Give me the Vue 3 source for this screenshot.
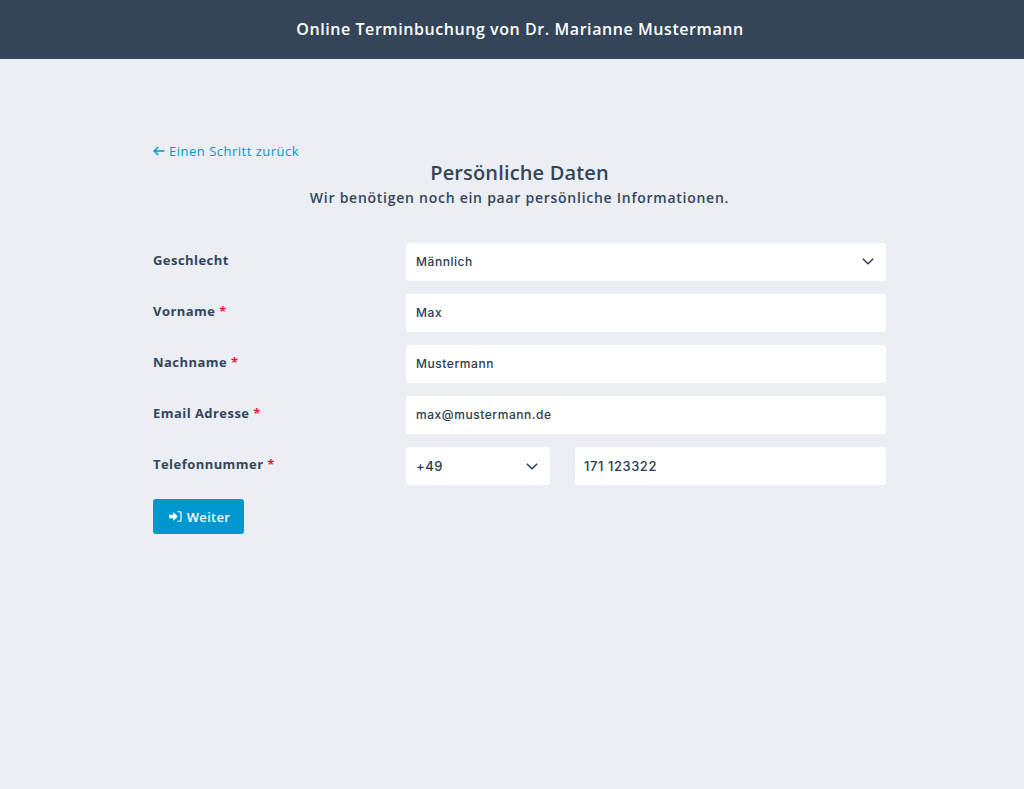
<template>
  <div class="page">
    <header class="topbar">Online Terminbuchung von Dr. Marianne Mustermann</header>
    <main class="content">
      <a class="back" href="#">
        <svg class="back-icon" viewBox="0 0 12 10" width="12" height="10" aria-hidden="true">
          <path d="M5.2 1 1.2 5l4 4M1.400 5H11.400" fill="none" stroke="currentColor" stroke-width="1.500" />
        </svg>
        Einen Schritt zurück
      </a>
      <h1 class="title">Persönliche Daten</h1>
      <p class="subtitle">Wir benötigen noch ein paar persönliche Informationen.</p>

      <form class="form" @submit.prevent>
        <div class="row" v-for="field in fields" :key="field.label">
          <label class="label">
            {{ field.label }}<span v-if="field.required" class="req"> *</span>
          </label>
          <div class="control" :class="{ select: field.select }">
            {{ field.value }}
            <svg v-if="field.select" class="chevron" viewBox="0 0 12 7" width="12" height="7" aria-hidden="true">
              <path d="M.8.8 6 5.800 11.200.8" fill="none" stroke="currentColor" stroke-width="1.500" />
            </svg>
          </div>
        </div>

        <div class="row">
          <label class="label">Telefonnummer<span class="req"> *</span></label>
          <div class="phone">
            <div class="control select prefix">
              +49
              <svg class="chevron" viewBox="0 0 12 7" width="12" height="7" aria-hidden="true">
                <path d="M.8.8 6 5.800 11.200.8" fill="none" stroke="currentColor" stroke-width="1.500" />
              </svg>
            </div>
            <div class="control number">171 123322</div>
          </div>
        </div>

        <button class="submit" type="submit">
          <svg viewBox="0 0 14 12" width="13" height="11" aria-hidden="true">
            <path d="M0 4h4.500V1L9.500 6l-5 5V8H0z" fill="currentColor" />
            <path d="M9 .8h3a1 1 0 0 1 1 1v8.400a1 1 0 0 1-1 1H9" fill="none" stroke="currentColor" stroke-width="1.300" />
          </svg>
          Weiter
        </button>
      </form>
    </main>
  </div>
</template>

<script setup>
const fields = [
  { label: 'Geschlecht', value: 'Männlich', select: true },
  { label: 'Vorname', value: 'Max', required: true },
  { label: 'Nachname', value: 'Mustermann', required: true },
  { label: 'Email Adresse', value: 'max@mustermann.de', required: true }
]
</script>

<style>
body {
  margin: 0;
  background: #ebeef3;
}
</style>

<style scoped>
.page {
  min-height: 789px;
  background: #ebeef3;
  color: #34455a;
  font-family: "Open Sans", "Liberation Sans", sans-serif;
}
.topbar {
  height: 59px;
  padding-left: 16px;
  line-height: 59px;
  background: #34455a;
  color: #fff;
  text-align: center;
  font-size: 16px;
  font-weight: 600;
  letter-spacing: 0.57px;
}
.content {
  width: 733px;
  margin-left: 153px;
  padding-top: 83px;
}
.back {
  display: flex;
  align-items: center;
  gap: 4px;
  height: 18px;
  color: #0097cf;
  font-size: 13px;
  letter-spacing: 0.5px;
  text-decoration: none;
}
.title {
  margin: 0;
  text-align: center;
  font-size: 20px;
  line-height: 26px;
  font-weight: 600;
  letter-spacing: 0.15px;
}
.subtitle {
  margin: 1px 0 0;
  text-align: center;
  font-size: 14px;
  line-height: 22px;
  font-weight: 600;
  letter-spacing: 0.74px;
}
.form {
  margin-top: 34px;
  display: flex;
  flex-direction: column;
  gap: 13px;
}
.row {
  display: grid;
  grid-template-columns: 253px 480px;
}
.label {
  font-size: 13px;
  line-height: 35px;
  font-weight: 700;
  letter-spacing: 0.45px;
}
.req {
  color: #e8173f;
}
.control {
  height: 38px;
  box-sizing: border-box;
  padding: 0 12px 1px 10px;
  display: flex;
  align-items: center;
  justify-content: space-between;
  background: #fff;
  border-radius: 3px;
  color: #2d3c50;
  font-family: Inter, "Liberation Sans", sans-serif;
  font-size: 12px;
  font-weight: 500;
  letter-spacing: 0.56px;
}
.chevron {
  flex: none;
}
.phone {
  display: grid;
  grid-template-columns: 144px 311px;
  gap: 25px;
}
.prefix,
.number {
  padding-bottom: 0;
  font-size: 13px;
}
.number {
  padding-left: 9px;
}
.submit {
  width: 91px;
  height: 35px;
  margin-top: 1px;
  padding: 0 0 0 2px;
  display: flex;
  align-items: center;
  justify-content: center;
  gap: 5px;
  border: 0;
  border-radius: 3px;
  background: #0097cf;
  color: #fff;
  font-family: inherit;
  font-size: 13px;
  font-weight: 600;
  letter-spacing: 0.3px;
}
</style>
